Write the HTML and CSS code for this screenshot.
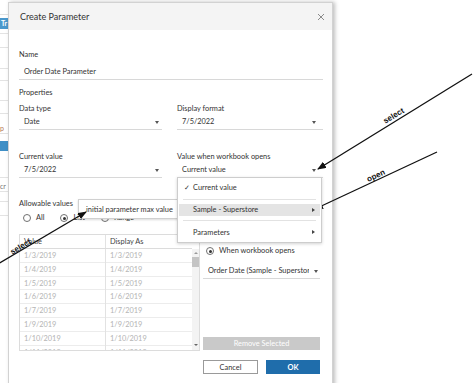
FILE: index.html
```html
<!DOCTYPE html>
<html lang="en">
<head>
  <meta charset="UTF-8">
  <title>Create Parameter</title>
  <link rel="stylesheet" href="styles.css">
</head>
<body>
  <div class="screen">
    <div class="side">
      <div class="side-cell s3"></div>
      <div class="side-cell s12"></div>
      <div class="side-tab">Tr</div>
      <div class="side-cell s5"></div>
      <div class="side-cell s14"></div>
      <div class="side-cell s21"></div>
      <div class="side-cell s12"></div>
      <div class="side-cell s20"></div>
      <div class="side-cell s13"></div>
      <div class="side-text warm s20">p</div>
      <div class="side-cell s7"></div>
      <div class="side-bar"></div>
      <div class="side-cell s27"></div>
      <div class="side-text s14">cr</div>
      <div class="side-cell s10"></div>
      <div class="side-cell s14"></div>
    </div>

    <div class="dialog">
      <div class="dialog-head">
        <span class="dialog-title">Create Parameter</span>
        <svg class="close" width="8" height="8" viewBox="0 0 8 8">
          <path d="M1 1 L7 7 M7 1 L1 7" stroke="#8a8a8a" stroke-width="1"/>
        </svg>
      </div>

      <div class="dialog-body">
        <div class="label">Name</div>
        <div class="input">Order Date Parameter</div>

        <div class="label section">Properties</div>

        <div class="two-col row-one">
          <div class="field">
            <div class="label">Data type</div>
            <div class="select">Date<span class="caret"></span></div>
          </div>
          <div class="field">
            <div class="label">Display format</div>
            <div class="select">7/5/2022<span class="caret"></span></div>
          </div>
        </div>

        <div class="two-col row-two">
          <div class="field">
            <div class="label">Current value</div>
            <div class="select">7/5/2022<span class="caret"></span></div>
          </div>
          <div class="field open">
            <div class="label">Value when workbook opens</div>
            <div class="select">Current value<span class="caret"></span></div>
            <div class="menu">
              <div class="menu-item"><span class="check">✓</span>Current value</div>
              <div class="menu-sep"></div>
              <div class="menu-item active">Sample - Superstore<span class="sub"></span></div>
              <div class="menu-sep"></div>
              <div class="menu-item last">Parameters<span class="sub"></span></div>
            </div>
          </div>
        </div>

        <div class="label allow">Allowable values</div>
        <div class="radios">
          <label class="radio"><span class="dot"></span>All</label>
          <label class="radio on"><span class="dot"></span>List</label>
          <label class="radio"><span class="dot"></span>Range</label>
          <div class="tooltip">initial parameter max value</div>
        </div>

        <div class="lower">
          <div class="table">
            <div class="t-head">
              <div class="cell">Value</div>
              <div class="cell">Display As</div>
            </div>
            <div class="t-main">
              <div class="t-rows">
                <div class="t-row"><div class="cell">1/3/2019</div><div class="cell">1/3/2019</div></div>
                <div class="t-row"><div class="cell">1/4/2019</div><div class="cell">1/4/2019</div></div>
                <div class="t-row"><div class="cell">1/5/2019</div><div class="cell">1/5/2019</div></div>
                <div class="t-row"><div class="cell">1/6/2019</div><div class="cell">1/6/2019</div></div>
                <div class="t-row"><div class="cell">1/7/2019</div><div class="cell">1/7/2019</div></div>
                <div class="t-row"><div class="cell">1/9/2019</div><div class="cell">1/9/2019</div></div>
                <div class="t-row"><div class="cell">1/10/2019</div><div class="cell">1/10/2019</div></div>
                <div class="t-row"><div class="cell">1/11/2019</div><div class="cell">1/11/2019</div></div>
              </div>
              <div class="scrollbar">
                <span class="sb-up"></span>
                <span class="sb-thumb"></span>
                <span class="sb-down"></span>
              </div>
            </div>
          </div>

          <div class="side-col">
            <label class="radio on"><span class="dot"></span>When workbook opens</label>
            <div class="select wide"><span class="clip">Order Date (Sample - Superstore)</span><span class="caret"></span></div>
            <button class="btn remove">Remove Selected</button>
          </div>
        </div>

        <div class="footer">
          <button class="btn cancel">Cancel</button>
          <button class="btn ok">OK</button>
        </div>
      </div>
    </div>

    <svg class="notes" width="474" height="383" viewBox="0 0 474 383">
      <defs>
        <marker id="head" markerWidth="9" markerHeight="7" refX="8" refY="3.5" orient="auto" markerUnits="userSpaceOnUse">
          <path d="M0 0 L9 3.5 L0 7 Z" fill="#111"/>
        </marker>
      </defs>
      <line x1="472" y1="74" x2="318" y2="169" stroke="#111" stroke-width="1.3" marker-end="url(#head)"/>
      <text class="note" x="395" y="118" transform="rotate(-31 395 118)">select</text>

      <line x1="437" y1="152" x2="315" y2="209" stroke="#111" stroke-width="1.3" marker-end="url(#head)"/>
      <text class="note" x="377" y="178" transform="rotate(-25 377 178)">open</text>

      <line x1="-2" y1="264" x2="86" y2="212" stroke="#111" stroke-width="1.3" marker-end="url(#head)"/>
      <text class="note" x="22" y="249" transform="rotate(-31 22 249)">select</text>
    </svg>
  </div>
</body>
</html>
```

FILE: styles.css
```css
* {
  box-sizing: border-box;
}

body {
  margin: 0;
  background: #fff;
  font-family: Lato, "Open Sans", sans-serif;
  font-size: 7.4px;
  color: #333;
}

.screen {
  position: relative;
  display: flex;
  width: 474px;
  height: 383px;
  overflow: hidden;
}

/* workbook pane peeking out on the left */
.side {
  width: 8px;
  flex: none;
  display: flex;
  flex-direction: column;
  color: #777;
  overflow: hidden;
}

.side-cell {
  border-bottom: 1px solid #e3e3e3;
}

.side-text {
  display: flex;
  align-items: flex-end;
  padding-bottom: 1px;
  font-size: 7px;
  white-space: nowrap;
  border-bottom: 1px solid #e3e3e3;
}

.side-text.warm {
  color: #b3774f;
}

.s3 { height: 3px; border: none; }
.s5 { height: 5px; }
.s7 { height: 7px; border: none; }
.s10 { height: 10px; }
.s12 { height: 12px; }
.s13 { height: 13px; }
.s14 { height: 14px; }
.s20 { height: 20px; }
.s21 { height: 21px; }
.s27 { height: 27px; }

.side-tab {
  height: 11px;
  margin-top: 3px;
  background: #4a98cc;
  color: #fff;
  font-size: 7px;
  font-weight: bold;
  line-height: 11px;
  padding-left: 1px;
}

.side-bar {
  height: 10px;
  background: #3f8fc6;
}

/* dialog */
.dialog {
  flex: none;
  width: 325px;
  height: 392px;
  margin-top: 2px;
  border: 1px solid #d2d2d2;
  background: #fff;
  box-shadow: 2px 0 4px rgba(0, 0, 0, 0.25);
}

.dialog-head {
  height: 27px;
  background: #f4f4f4;
  display: flex;
  align-items: center;
  justify-content: space-between;
  padding: 0 7px 0 11px;
}

.dialog-title {
  font-size: 9px;
  color: #333;
}

.dialog-body {
  padding: 20px 9px 0 10px;
}

.label {
  height: 10px;
  line-height: 10px;
  color: #333;
}

.input {
  margin-top: 5px;
  height: 15px;
  line-height: 14px;
  padding-left: 5px;
  border-bottom: 1px solid #d8d8d8;
}

.section {
  margin-top: 8px;
}

.two-col {
  display: grid;
  grid-template-columns: 143px 146px;
  column-gap: 15px;
}

.row-one {
  margin-top: 6px;
}

.row-two {
  margin-top: 22px;
}

.field {
  position: relative;
}

.select {
  position: relative;
  margin-top: 1px;
  height: 15px;
  line-height: 14px;
  padding-left: 5px;
  border-bottom: 1px solid #d8d8d8;
  white-space: nowrap;
}

.caret {
  position: absolute;
  right: 3px;
  top: 6px;
  border-left: 2px solid transparent;
  border-right: 2px solid transparent;
  border-top: 3px solid #555;
}

.field:last-child .caret {
  right: 7px;
}

/* open dropdown */
.menu {
  position: absolute;
  top: 25px;
  left: 0;
  width: 145px;
  padding: 3px 0 2px;
  background: #fff;
  border: 1px solid #cdcdcd;
  box-shadow: 0 1px 3px rgba(0, 0, 0, 0.18);
  z-index: 2;
}

.menu-item {
  position: relative;
  height: 14px;
  line-height: 14px;
  padding-left: 15px;
}

.menu-item.active {
  height: 12px;
  line-height: 12px;
  margin: 2px 1px 0;
  padding-left: 14px;
  background: #e4e4e4;
}

.menu-item.last {
  margin-top: 2px;
  height: 15px;
  line-height: 15px;
}

.check {
  position: absolute;
  left: 6px;
}

.sub {
  position: absolute;
  right: 6px;
  top: 50%;
  margin-top: -2.5px;
  border-top: 2.5px solid transparent;
  border-bottom: 2.5px solid transparent;
  border-left: 3px solid #444;
}

.menu-item.active .sub {
  right: 5px;
}

.menu-sep {
  height: 1px;
  margin: 4px 5px;
  background: #e2e2e2;
}

.allow {
  margin-top: 21px;
}

.radios {
  position: relative;
  display: flex;
  gap: 16px;
  margin-top: 4px;
  height: 10px;
  padding-left: 4px;
}

.radio {
  display: flex;
  align-items: center;
  gap: 5px;
  line-height: 10px;
  white-space: nowrap;
}

.dot {
  position: relative;
  width: 8px;
  height: 8px;
  border: 1px solid #707070;
  border-radius: 50%;
  background: #fff;
}

.radio.on .dot::after {
  content: "";
  position: absolute;
  left: 1.5px;
  top: 1.5px;
  width: 3px;
  height: 3px;
  border-radius: 50%;
  background: #333;
}

.tooltip {
  position: absolute;
  left: 59px;
  top: -14px;
  height: 20px;
  padding: 0 7px;
  line-height: 19px;
  background: #fff;
  border: 1px solid #d0d0d0;
  box-shadow: 0 1px 2px rgba(0, 0, 0, 0.15);
  color: #333;
  white-space: nowrap;
}

/* list + right column */
.lower {
  display: grid;
  grid-template-columns: 181px 117px;
  column-gap: 3px;
  margin-top: 11px;
  height: 117px;
}

.table {
  height: 117px;
  border: 1px solid #dcdcdc;
  overflow: hidden;
}

.t-head,
.t-row {
  display: grid;
  grid-template-columns: 86px 1fr;
}

.t-head {
  height: 14px;
  line-height: 13px;
  border-bottom: 1px solid #dcdcdc;
  color: #444;
  margin-right: 7px;
}

.t-head .cell:first-child,
.t-row .cell:first-child {
  border-right: 1px solid #e2e2e2;
}

.cell {
  padding-left: 4px;
  white-space: nowrap;
}

.t-main {
  display: flex;
}

.t-rows {
  flex: 1;
}

.t-row {
  height: 13.8px;
  line-height: 13.8px;
  color: #b4b4b4;
  border-bottom: 1px solid #ececec;
}

.scrollbar {
  position: relative;
  width: 7px;
  height: 102px;
  background: #f3f3f3;
}

.sb-up,
.sb-down {
  position: absolute;
  left: 1.5px;
  border-left: 2px solid transparent;
  border-right: 2px solid transparent;
}

.sb-up {
  top: 3px;
  border-bottom: 2px solid #999;
}

.sb-down {
  bottom: 5px;
  border-top: 2px solid #666;
}

.sb-thumb {
  position: absolute;
  left: 0;
  top: 8px;
  width: 7px;
  height: 10px;
  background: #c4c4c4;
}

.side-col {
  display: flex;
  flex-direction: column;
  padding-top: 12px;
}

.side-col .radio {
  padding-left: 3px;
  height: 10px;
}

.select.wide {
  margin-top: 8px;
  padding-left: 5px;
  overflow: hidden;
}

.clip {
  display: block;
  width: 101px;
  overflow: hidden;
}

.select.wide .caret {
  right: 2px;
}

.btn {
  font-family: Lato, "Open Sans", sans-serif;
  font-size: 7.4px;
  padding: 0;
  cursor: pointer;
}

.remove {
  margin-top: auto;
  margin-bottom: 1px;
  height: 13px;
  border: none;
  background: #c9c9c9;
  color: #fff;
}

.footer {
  display: flex;
  justify-content: flex-end;
  gap: 8px;
  margin-top: 9px;
  padding-right: 3px;
}

.cancel {
  width: 55px;
  height: 14px;
  border: 1px solid #9a9a9a;
  background: #fff;
  color: #333;
}

.ok {
  width: 54px;
  height: 14px;
  border: none;
  background: #1f6dab;
  color: #fff;
  font-weight: bold;
}

/* hand-drawn annotations */
.notes {
  position: absolute;
  left: 0;
  top: 0;
  pointer-events: none;
}

.note {
  font-family: "Liberation Sans", Arial, sans-serif;
  font-size: 8px;
  font-weight: bold;
  fill: #111;
  text-anchor: middle;
}
```
